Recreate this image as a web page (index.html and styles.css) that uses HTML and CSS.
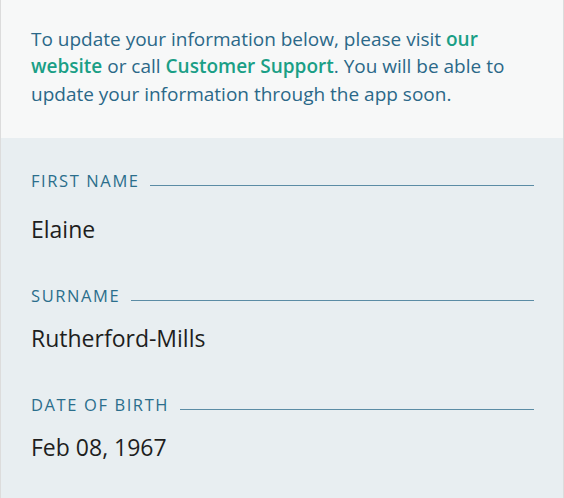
FILE: index.html
```html
<!DOCTYPE html>
<html>
<head>
<meta charset="utf-8">
<link rel="stylesheet" href="styles.css">
</head>
<body>
<div class="screen">
  <section class="notice">
    <p>To update your information below, please visit <a class="link" href="#">our website</a> or call <a class="link" href="#">Customer Support</a>. You will be able to update your information through the app soon.</p>
  </section>
  <section class="details">
    <div class="field field-first">
      <div class="label-row"><span class="label">First Name</span><span class="rule"></span></div>
      <div class="value">Elaine</div>
    </div>
    <div class="field">
      <div class="label-row"><span class="label">Surname</span><span class="rule"></span></div>
      <div class="value">Rutherford-Mills</div>
    </div>
    <div class="field">
      <div class="label-row"><span class="label">Date of Birth</span><span class="rule"></span></div>
      <div class="value">Feb 08, 1967</div>
    </div>
  </section>
</div>
</body>
</html>
```
FILE: styles.css
```css
html, body {
  margin: 0;
  padding: 0;
}
body {
  font-family: "Open Sans", "Noto Sans", sans-serif;
  width: 564px;
  height: 498px;
  overflow: hidden;
}
.screen {
  height: 498px;
  border-left: 1px solid #dcdcdc;
  border-right: 1px solid #dcdcdc;
  box-sizing: border-box;
  background: #e8eef1;
  display: flex;
  flex-direction: column;
}
.notice {
  background: #f7f8f8;
  height: 138px;
  flex: none;
  box-sizing: border-box;
  padding: 25.5px 30px 0 30px;
}
.notice p {
  margin: 0;
  font-size: 19px;
  line-height: 27.5px;
  color: #2b6888;
}
.link {
  color: #1a9f86;
  font-weight: 600;
  text-decoration: none;
}
.details {
  padding: 33px 29px 0 30px;
  display: flex;
  flex-direction: column;
  gap: 42px;
}
.label-row {
  display: flex;
  align-items: flex-end;
  height: 20px;
  gap: 10.5px;
}
.label {
  text-transform: uppercase;
  font-size: 16.5px;
  letter-spacing: 1.6px;
  color: #2b6e8c;
  line-height: 20px;
}
.rule {
  flex: 1;
  height: 0;
  margin-bottom: 5px;
  border-top: 1px solid #5b8ca5;
}
.value {
  margin-top: 17px;
  font-size: 23px;
  line-height: 30px;
  color: #1e1e1e;
}
.field-first .value {
  margin-top: 23px;
}
```
